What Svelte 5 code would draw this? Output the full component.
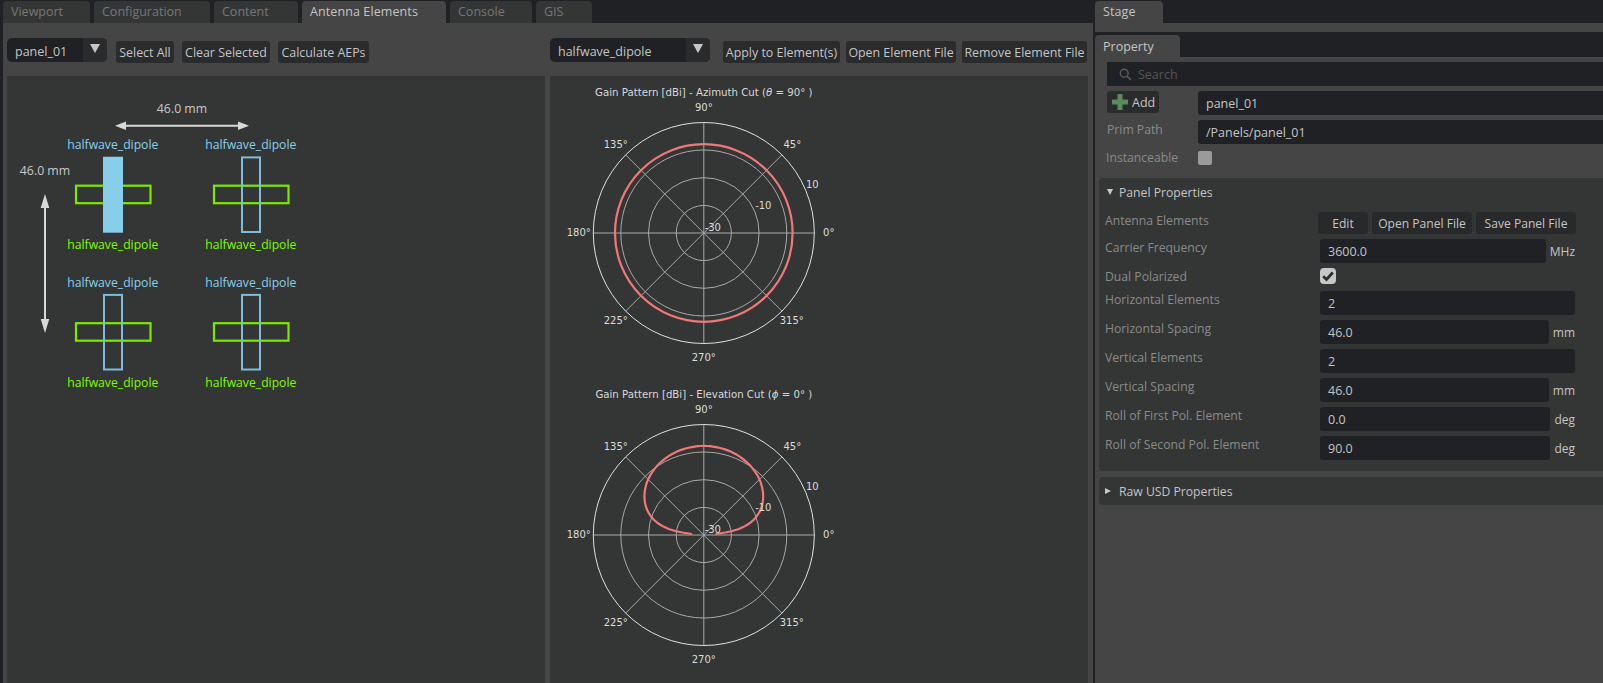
<script>
    const tabs = ['Viewport', 'Configuration', 'Content', 'Antenna Elements', 'Console', 'GIS'];

    // element grid of the panel preview, positions as drawn on the canvas
    const elements = [
        { x: 105.5, y: 80.7, top: 73, bottom: 172.7, selected: true },
        { x: 243.5, y: 80.7, top: 73, bottom: 172.7, selected: false },
        { x: 105.5, y: 218.2, top: 211, bottom: 311, selected: false },
        { x: 243.5, y: 218.2, top: 211, bottom: 311, selected: false },
    ];

    const rings = [27.6, 55.3, 83];
    const spokes = [0, 45, 90, 135];
    const outer = 110.5;

    const tickLabels = [
        { t: '0°', x: 125, y: -1 },
        { t: '45°', x: 88.5, y: -89 },
        { t: '90°', x: 0, y: -126 },
        { t: '135°', x: -88, y: -89 },
        { t: '180°', x: -125, y: -1 },
        { t: '225°', x: -88, y: 87 },
        { t: '270°', x: 0, y: 124 },
        { t: '315°', x: 88, y: 87 },
        { t: '10', x: 108.5, y: -49 },
        { t: '-10', x: 59.5, y: -28 },
        { t: '-30', x: 9, y: -6 },
    ];

    // dB curve of the elevation cut squeezed into plot pixels
    function elevationPath() {
        const pts = [];
        for (let d = 0; d <= 180; d += 2) {
            const rad = (d * Math.PI) / 180;
            const s = Math.sin(rad);
            const r = 88 + 66 * Math.log10(Math.sqrt(s * s + 0.0049));
            pts.push(`${(r * Math.cos(rad)).toFixed(1)},${(-r * s - 1).toFixed(1)}`);
        }
        return 'M' + pts.join('L');
    }

    const plots = [
        { cx: 153.8, cy: 157, titleY: 20, pre: 'Gain Pattern [dBi] - Azimuth Cut (', sym: 'θ', post: ' = 90° )', full: true },
        { cx: 153.8, cy: 459, titleY: 322, pre: 'Gain Pattern [dBi] - Elevation Cut (', sym: 'ϕ', post: ' = 0° )', full: false },
    ];

    const rows = [
        { label: 'Carrier Frequency', value: '3600.0', unit: 'MHz' },
        { label: 'Dual Polarized', check: true },
        { label: 'Horizontal Elements', value: '2' },
        { label: 'Horizontal Spacing', value: '46.0', unit: 'mm' },
        { label: 'Vertical Elements', value: '2' },
        { label: 'Vertical Spacing', value: '46.0', unit: 'mm' },
        { label: 'Roll of First Pol. Element', value: '0.0', unit: 'deg' },
        { label: 'Roll of Second Pol. Element', value: '90.0', unit: 'deg' },
    ];
</script>

<main class="app">
    <section class="left">
        <div class="tabs">
            {#each tabs as tab}
                <div class="tab" class:active={tab === 'Antenna Elements'}>{tab}</div>
            {/each}
        </div>
        <div class="workspace">
            <div class="toolbars">
                <div class="toolbar">
                    <div class="combo wide-1">
                        <span class="combo-text">panel_01</span>
                        <span class="combo-arrow"><i></i></span>
                    </div>
                    <button class="btn b1">Select All</button>
                    <button class="btn b2">Clear Selected</button>
                    <button class="btn b3">Calculate AEPs</button>
                </div>
                <div class="toolbar">
                    <div class="combo wide-2">
                        <span class="combo-text">halfwave_dipole</span>
                        <span class="combo-arrow"><i></i></span>
                    </div>
                    <button class="btn b4">Apply to Element(s)</button>
                    <button class="btn b5">Open Element File</button>
                    <button class="btn b6">Remove Element File</button>
                </div>
            </div>
            <div class="panes">
                <div class="pane">
                    <svg class="canvas" width="538" height="607" viewBox="0 0 538 607">
                        <text class="dim" x="175" y="36.5">46.0 mm</text>
                        <path class="dim-line" d="M118 49.7H239" />
                        <path class="dim-head" d="M108 49.7L119 45.5V54ZM242 49.7L231 45.5V54Z" />
                        <text class="dim" x="38" y="98.5">46.0 mm</text>
                        <path class="dim-line" d="M38 128V248" />
                        <path class="dim-head" d="M38 118L33.7 132H42.3ZM38 257L33.7 243H42.3Z" />
                        {#each elements as el}
                            <rect class="pol-green" x={el.x - 36.5} y={el.y + 29} width="74.5" height="17.5" />
                            {#if el.selected}
                                <rect class="pol-fill" x={el.x - 9.5} y={el.y} width="20" height="76" />
                            {:else}
                                <rect class="pol-blue" x={el.x - 8.5} y={el.y + 0.7} width="18" height="74.6" />
                            {/if}
                            <text class="lbl blue" x={el.x + 0.3} y={el.top}>halfwave_dipole</text>
                            <text class="lbl green" x={el.x + 0.3} y={el.bottom}>halfwave_dipole</text>
                        {/each}
                    </svg>
                </div>
                <div class="pane">
                    <svg class="canvas" width="538" height="607" viewBox="0 0 538 607">
                        {#each plots as plot}
                            <text class="plot-title" x={plot.cx} y={plot.titleY}>{plot.pre}<tspan class="sym">{plot.sym}</tspan>{plot.post}</text>
                            <g transform="translate({plot.cx} {plot.cy})">
                                {#each spokes as a}
                                    <line
                                        class="grid"
                                        x1={outer * Math.cos((a * Math.PI) / 180)}
                                        y1={-outer * Math.sin((a * Math.PI) / 180)}
                                        x2={-outer * Math.cos((a * Math.PI) / 180)}
                                        y2={outer * Math.sin((a * Math.PI) / 180)}
                                    />
                                {/each}
                                {#each rings as r}
                                    <circle class="grid" {r} />
                                {/each}
                                <circle class="rim" r={outer} />
                                {#if plot.full}
                                    <circle class="gain" r="88.8" />
                                {:else}
                                    <path class="gain" d={elevationPath()} />
                                {/if}
                                {#each tickLabels as l}
                                    <text class="tick" x={l.x} y={l.y}>{l.t}</text>
                                {/each}
                            </g>
                        {/each}
                    </svg>
                </div>
            </div>
        </div>
    </section>

    <section class="right">
        <div class="tabs stage-tabs">
            <div class="tab active">Stage</div>
        </div>
        <div class="strip"></div>
        <div class="prop-tabs">
            <div class="prop-tab">Property</div>
        </div>
        <div class="prop-head">
            <div class="search">
                <svg width="13" height="13" viewBox="0 0 13 13">
                    <circle cx="5.2" cy="5.2" r="3.9" fill="none" stroke="#5c5c5c" stroke-width="1.4" />
                    <path d="M8.2 8.2L12 12" stroke="#5c5c5c" stroke-width="1.6" />
                </svg>
                <span>Search</span>
            </div>
            <div class="head-row">
                <button class="add">
                    <svg width="16" height="16" viewBox="0 0 16 16">
                        <path d="M5.5 0H10.5V5.5H16V10.5H10.5V16H5.5V10.5H0V5.5H5.5Z" fill="#5a8a5e" />
                    </svg>
                    Add
                </button>
                <div class="input">panel_01</div>
            </div>
            <div class="head-row">
                <span class="label">Prim Path</span>
                <div class="input">/Panels/panel_01</div>
            </div>
            <div class="head-row inst">
                <span class="label">Instanceable</span>
                <span class="box"></span>
            </div>
        </div>
        <div class="sections">
            <div class="group">
                <div class="group-head"><i class="tri-down"></i>Panel Properties</div>
                <div class="row">
                    <span class="label">Antenna Elements</span>
                    <div class="row-btns">
                        <button class="btn edit">Edit</button>
                        <button class="btn panel-btn">Open Panel File</button>
                        <button class="btn panel-btn">Save Panel File</button>
                    </div>
                </div>
                {#each rows as row}
                    <div class="row" class:check-row={row.check}>
                        <span class="label">{row.label}</span>
                        {#if row.check}
                            <span class="check">
                                <svg width="16" height="16" viewBox="0 0 16 16">
                                    <path d="M3.2 8.2L6.5 11.5L12.8 4.5" fill="none" stroke="#2c2d2f" stroke-width="2.8" />
                                </svg>
                            </span>
                        {:else}
                            <div class="field">
                                <div class="input">{row.value}</div>
                                {#if row.unit}<span class="unit">{row.unit}</span>{/if}
                            </div>
                        {/if}
                    </div>
                {/each}
            </div>
            <div class="group raw">
                <i class="tri-right"></i>Raw USD Properties
            </div>
        </div>
    </section>
</main>

<style>
    :global(body) {
        margin: 0;
        background: #1f2125;
    }
    .app {
        display: flex;
        width: 1603px;
        height: 683px;
        overflow: hidden;
        background: #1f2125;
        font-family: "Open Sans", "Noto Sans", sans-serif;
        font-size: 12.5px;
        color: #c4c4c4;
    }
    .left {
        width: 1090px;
        margin-left: 3px;
        margin-right: 2px;
        flex: none;
        display: flex;
        flex-direction: column;
    }
    .right {
        flex: 1;
        min-width: 0;
        display: flex;
        flex-direction: column;
        background: #454545;
    }
    .tabs {
        display: flex;
        gap: 4px;
        height: 23px;
        padding-top: 1px;
        box-sizing: border-box;
        flex: none;
        background: #1f2125;
    }
    .tab {
        background: #343636;
        color: #767676;
        border-radius: 4px 4px 0 0;
        padding: 2px 8px 0;
        line-height: 18px;
        box-sizing: border-box;
    }
    .tab.active {
        background: #454545;
        color: #c4c4c4;
        letter-spacing: 0.1px;
    }
    .tab:nth-child(1) { width: 87px; }
    .tab:nth-child(2) { width: 116px; }
    .tab:nth-child(3) { width: 84px; }
    .tab:nth-child(4) { width: 144px; }
    .tab:nth-child(5) { width: 82px; }
    .tab:nth-child(6) { width: 56px; }
    .stage-tabs .tab {
        width: 68px;
    }
    .workspace {
        flex: 1;
        display: flex;
        flex-direction: column;
        background: #454545;
        min-height: 0;
    }
    .toolbars {
        display: flex;
        gap: 5px;
        height: 53px;
        flex: none;
        padding: 0 5px 0 4px;
    }
    .toolbar {
        flex: 1;
        display: flex;
        align-items: flex-start;
        padding-top: 15px;
        gap: 8px;
    }
    .combo {
        height: 24px;
        background: #1f2125;
        border-radius: 5px;
        display: flex;
        overflow: hidden;
        margin-right: 1px;
    }
    .wide-1 { width: 100px; margin-right: 1px; }
    .wide-2 { width: 160px; margin-right: 5px; }
    .combo-text {
        flex: 1;
        padding: 2px 0 0 8px;
        line-height: 24px;
    }
    .combo-arrow {
        width: 24px;
        background: #2a2b2d;
        display: flex;
        align-items: center;
        justify-content: center;
    }
    .combo-arrow i {
        display: block;
        border-left: 5px solid transparent;
        border-right: 5px solid transparent;
        border-top: 9px solid #c8c8c8;
        margin-top: -3px;
    }
    .btn {
        height: 22px;
        margin: 3px 0 0;
        padding: 0;
        border: none;
        border-radius: 3px;
        background: #2a2b2c;
        color: #c4c4c4;
        font: inherit;
        font-size: 12.4px;
    }
    .b1 { width: 58px; }
    .b2 { width: 88px; }
    .b3 { width: 91px; }
    .b4 { width: 117px; margin-right: -2px; }
    .b5 { width: 110px; margin-right: -2px; }
    .b6 { width: 125px; }
    .panes {
        flex: 1;
        min-height: 0;
        display: flex;
        gap: 5px;
        padding: 0 5px 0 4px;
    }
    .pane {
        width: 538px;
        background: #343635;
    }
    .canvas {
        display: block;
    }
    .dim {
        font-size: 12.3px;
        fill: #c8c8c8;
        text-anchor: middle;
    }
    .dim-line {
        stroke: #d8d8d8;
        stroke-width: 2;
    }
    .dim-head {
        fill: #d8d8d8;
    }
    .lbl {
        font-size: 12.2px;
        text-anchor: middle;
    }
    .lbl.blue { fill: #87ceeb; }
    .lbl.green { fill: #7cfc00; }
    .pol-green {
        fill: none;
        stroke: #7ce800;
        stroke-width: 2.2;
    }
    .pol-blue {
        fill: none;
        stroke: #7dbddb;
        stroke-width: 2;
    }
    .pol-fill {
        fill: #87ceeb;
    }
    .plot-title {
        font-family: "DejaVu Sans", sans-serif;
        font-size: 10.2px;
        fill: #d8d8d8;
        text-anchor: middle;
    }
    .sym {
        font-style: italic;
    }
    .tick {
        font-family: "DejaVu Sans", sans-serif;
        font-size: 10px;
        fill: #dcdcdc;
        text-anchor: middle;
        dominant-baseline: central;
    }
    .grid {
        fill: none;
        stroke: #a8a8a8;
        stroke-width: 1;
    }
    .rim {
        fill: none;
        stroke: #e0e0e0;
        stroke-width: 1;
    }
    .gain {
        fill: none;
        stroke: #f07878;
        stroke-width: 2.2;
    }
    .strip {
        height: 9px;
        flex: none;
    }
    .prop-tabs {
        height: 25px;
        flex: none;
        background: #1f2125;
        padding-top: 3px;
        box-sizing: border-box;
    }
    .prop-tab {
        width: 85px;
        height: 22px;
        background: #454545;
        border-radius: 4px 4px 0 0;
        padding: 3px 8px 0;
        box-sizing: border-box;
        line-height: 18px;
    }
    .prop-head {
        padding: 5px 0 0 12px;
        flex: none;
        display: flex;
        flex-direction: column;
        gap: 5px;
    }
    .search {
        height: 24px;
        background: #1f2125;
        display: flex;
        align-items: center;
        gap: 6px;
        padding-left: 12px;
        color: #565656;
    }
    .head-row {
        display: grid;
        grid-template-columns: 91px 1fr;
        height: 24px;
    }
    .head-row .label {
        line-height: 20px;
    }
    .inst {
        height: 14px;
        margin-top: 2px;
    }
    .inst .label {
        margin-left: -1px;
        line-height: 14px;
    }
    .add {
        width: 52px;
        height: 22px;
        padding: 0 0 0 5px;
        display: flex;
        align-items: center;
        gap: 4px;
        background: #2a2b2c;
        border: none;
        border-radius: 3px;
        color: #c4c4c4;
        font: inherit;
    }
    .input {
        height: 24px;
        line-height: 25px;
        background: #1f2125;
        border-radius: 3px 0 0 3px;
        padding-left: 8px;
        box-sizing: border-box;
        flex: 1;
    }
    .box {
        width: 14px;
        height: 14px;
        background: #9a9a9a;
        border-radius: 2px;
    }
    .label {
        color: #8a8a8a;
        font-size: 12.2px;
    }
    .sections {
        padding: 13px 0 0 4px;
        display: flex;
        flex-direction: column;
        gap: 6px;
    }
    .group {
        background: #343635;
        border-radius: 4px 0 0 4px;
        padding: 0 28px 11px 6px;
    }
    .group-head {
        height: 34px;
        padding: 6px 0 0 2px;
        display: flex;
        align-items: flex-start;
        line-height: 18px;
        box-sizing: border-box;
        font-size: 12.2px;
        color: #c4c4c4;
    }
    .tri-down {
        display: block;
        margin: 5px 6px 0 0;
        border-left: 3.5px solid transparent;
        border-right: 3.5px solid transparent;
        border-top: 6px solid #c8c8c8;
    }
    .tri-right {
        display: block;
        margin: 0 8px 0 0;
        border-top: 3.5px solid transparent;
        border-bottom: 3.5px solid transparent;
        border-left: 6px solid #c8c8c8;
    }
    .raw {
        height: 28px;
        padding: 0 0 0 6px;
        display: flex;
        align-items: center;
        box-sizing: border-box;
        font-size: 12.2px;
    }
    .row {
        display: grid;
        grid-template-columns: 215px 1fr;
        margin-bottom: 5px;
    }
    .row:last-child {
        margin-bottom: 0;
    }
    .row .label {
        line-height: 18px;
    }
    .check-row {
        height: 18px;
    }
    .row-btns {
        display: flex;
        gap: 4px;
        margin-left: -2px;
    }
    .row-btns .btn {
        margin: 0;
        background: #28292b;
        font-size: 12.1px;
    }
    .edit { width: 50px; }
    .panel-btn { width: 100px; }
    .check {
        width: 16px;
        height: 16px;
        background: #c8c8c8;
        border-radius: 4px;
    }
    .check svg {
        display: block;
    }
    .field {
        display: flex;
        height: 24px;
    }
    .field .input {
        border-radius: 3px;
        line-height: 26px;
    }
    .unit {
        margin-left: 4px;
        line-height: 25px;
        font-size: 12px;
    }
</style>
